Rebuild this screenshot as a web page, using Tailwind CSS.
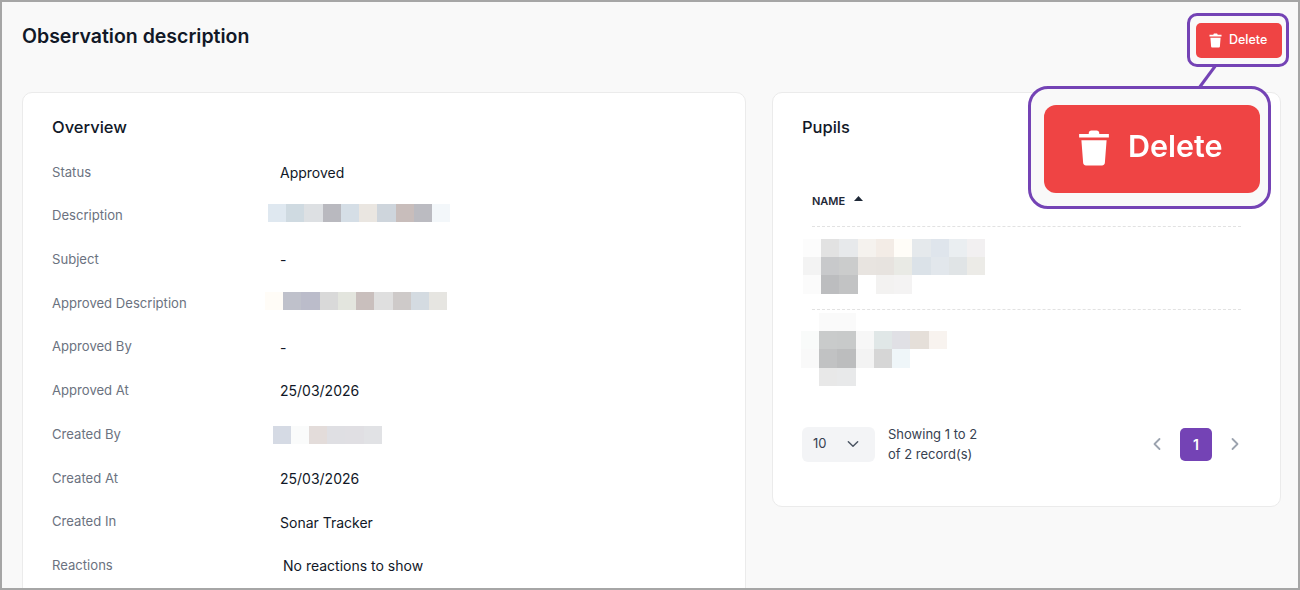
<!DOCTYPE html>
<html lang="en">
<head>
 <meta charset="UTF-8">
 <title>Observation description</title>
 <script src="https://cdn.jsdelivr.net/npm/@tailwindcss/browser@4"></script>
</head>
<body class="bg-[#f9f9f9]">
<div class="relative w-[1300px] h-[590px] overflow-hidden bg-[#f9f9f9] border-2 border-[#a6a6a6] font-['Inter',sans-serif] text-[#111827]">
 <div class="px-[20px]">
  <!-- header -->
  <div class="flex justify-between items-start h-[90px] mr-[-4px]">
   <h1 class="text-[19.5px] leading-[28px] font-semibold mt-[20px]">Observation description</h1>
   <button class="mt-[21px] w-[86px] h-[35px] bg-[#ef4444] text-white rounded-[5px] text-[12.500px] font-medium flex items-center justify-start pl-[11px] gap-[5px]">
    <svg class="w-[17px] h-[17px]" viewBox="0 0 24 24" fill="#fff"><path d="M9 3.500C9 2.700 9.700 2 10.500 2h3c.8 0 1.500.7 1.500 1.500V4h5.500v2.500h-17V4H9zM4.800 8h14.400l-1 12.600c-.1.8-.8 1.400-1.600 1.400H7.400c-.8 0-1.500-.6-1.600-1.400z"/></svg>
    Delete
   </button>
  </div>

  <div class="grid grid-cols-[724px_509px] gap-[26px] items-start">
   <!-- overview card -->
   <section class="bg-white border border-[#ebebeb] rounded-[10px] px-[29px] pt-[24px] h-[600px]">
    <h2 class="text-[16.500px] leading-[20px] font-medium mb-[13.700px]">Overview</h2>
    <div class="flex flex-col text-[14px]">
     <div class="flex items-center h-[43.700px]"><span class="w-[228px] text-[13.100px] text-[#6b7280]">Status</span><span>Approved</span></div>
     <div class="flex items-center h-[43.700px]"><span class="w-[228px] text-[13.100px] text-[#6b7280]">Description</span>
      <div class="flex h-[18px] ml-[-12px] mt-[-6px]">
       <i class="w-[18px] bg-[#dfe8f0]"></i><i class="w-[18px] bg-[#cfdae1]"></i><i class="w-[19px] bg-[#dde0e3]"></i><i class="w-[18px] bg-[#b9b9bf]"></i><i class="w-[18px] bg-[#d5dee6]"></i><i class="w-[18px] bg-[#eae6e1]"></i><i class="w-[19px] bg-[#ced5dc]"></i><i class="w-[18px] bg-[#c8bdbb]"></i><i class="w-[18px] bg-[#bbbbc1]"></i><i class="w-[18px] bg-[#f3f7fa]"></i>
      </div></div>
     <div class="flex items-center h-[43.700px]"><span class="w-[228px] text-[13.100px] text-[#6b7280]">Subject</span><span>-</span></div>
     <div class="flex items-center h-[43.700px]"><span class="w-[228px] text-[13.100px] text-[#6b7280]">Approved Description</span>
      <div class="flex h-[18px] ml-[-15px] mt-[-5px]">
       <i class="w-[18px] bg-[#fffcf7]"></i><i class="w-[18px] bg-[#bfc1cb]"></i><i class="w-[19px] bg-[#bbbcca]"></i><i class="w-[18px] bg-[#d9d9d9]"></i><i class="w-[18px] bg-[#e3e5de]"></i><i class="w-[18px] bg-[#c9bfbd]"></i><i class="w-[19px] bg-[#dfdfdf]"></i><i class="w-[18px] bg-[#cecac9]"></i><i class="w-[18px] bg-[#d4dbe1]"></i><i class="w-[18px] bg-[#e6e5e1]"></i>
      </div></div>
     <div class="flex items-center h-[43.700px]"><span class="w-[228px] text-[13.100px] text-[#6b7280]">Approved By</span><span>-</span></div>
     <div class="flex items-center h-[43.700px]"><span class="w-[228px] text-[13.100px] text-[#6b7280]">Approved At</span><span>25/03/2026</span></div>
     <div class="flex items-center h-[43.700px]"><span class="w-[228px] text-[13.100px] text-[#6b7280]">Created By</span>
      <div class="flex h-[18px] ml-[-7px]">
       <i class="w-[18px] bg-[#d5dae4]"></i><i class="w-[18px] bg-[#fafbfb]"></i><i class="w-[18px] bg-[#e3dcda]"></i><i class="w-[18px] bg-[#dfdfe3]"></i><i class="w-[19px] bg-[#e0dfe3]"></i><i class="w-[18px] bg-[#e1e2e5]"></i>
      </div></div>
     <div class="flex items-center h-[43.700px]"><span class="w-[228px] text-[13.100px] text-[#6b7280]">Created At</span><span>25/03/2026</span></div>
     <div class="flex items-center h-[43.700px]"><span class="w-[228px] text-[13.100px] text-[#6b7280]">Created In</span><span>Sonar Tracker</span></div>
     <div class="flex items-center h-[43.700px]"><span class="w-[228px] text-[13.100px] text-[#6b7280]">Reactions</span><span class="ml-[3px]">No reactions to show</span></div>
    </div>
   </section>

   <!-- pupils card -->
   <section class="bg-white border border-[#ebebeb] rounded-[10px] h-[415px] pl-[29px] pr-[39px] pt-[24px]">
    <h2 class="text-[16.500px] leading-[20px] font-medium">Pupils</h2>
    <div class="ml-[10px] h-[90px] flex items-end border-b border-dashed border-[#e2e2e2]">
     <div class="flex items-center gap-[9px] h-[16px] mb-[17px] text-[11px] font-semibold text-[#1f2937]">NAME
      <svg class="w-[9px] h-[5px] mb-[6px]" viewBox="0 0 9 5" fill="#1f2937"><path d="M4.500 0 9 5H0z"/></svg>
     </div>
    </div>
    <div class="h-[83px] pt-[12px] border-b border-dashed border-[#e2e2e2] ml-[10px]">
     <div class="flex h-[18px] ml-[-9px]">
      <i class="w-[18px] bg-[#fcfcfc]"></i><i class="w-[18px] bg-[#e2e2e2]"></i><i class="w-[19px] bg-[#e7e9eb]"></i><i class="w-[18px] bg-[#f5f2ee]"></i><i class="w-[18px] bg-[#f3ece6]"></i><i class="w-[18px] bg-[#fffdf8]"></i><i class="w-[19px] bg-[#e5e9ec]"></i><i class="w-[18px] bg-[#dfe5ec]"></i><i class="w-[18px] bg-[#eaeef1]"></i><i class="w-[18px] bg-[#f2f0f1]"></i>
     </div>
     <div class="flex h-[18px] ml-[-9px]">
      <i class="w-[18px] bg-[#f3f3f3]"></i><i class="w-[18px] bg-[#c8c9cb]"></i><i class="w-[19px] bg-[#cbcccc]"></i><i class="w-[18px] bg-[#e8e4e0]"></i><i class="w-[18px] bg-[#e7e3df]"></i><i class="w-[18px] bg-[#e9eae5]"></i><i class="w-[19px] bg-[#dbe2e8]"></i><i class="w-[18px] bg-[#e2e7ec]"></i><i class="w-[18px] bg-[#e0e4e6]"></i><i class="w-[18px] bg-[#ecebe7]"></i>
     </div>
     <div class="flex h-[19px] ml-[-9px]">
      <i class="w-[18px] bg-[#fbfbfb]"></i><i class="w-[18px] bg-[#bcbdbf]"></i><i class="w-[19px] bg-[#c2c3c4]"></i><i class="w-[18px] bg-white"></i><i class="w-[18px] bg-[#f3f2f1]"></i><i class="w-[18px] bg-[#f4f3f3]"></i>
     </div>
    </div>
    <div class="h-[114px] pt-[3px] ml-[10px]">
     <div class="flex h-[18px] ml-[-11px]">
      <i class="w-[18px] bg-white"></i><i class="w-[18px] bg-[#fafafa]"></i><i class="w-[19px] bg-[#fafafa]"></i>
     </div>
     <div class="flex h-[18px] ml-[-11px]">
      <i class="w-[18px] bg-[#f9fbfa]"></i><i class="w-[18px] bg-[#c9cbcb]"></i><i class="w-[19px] bg-[#c8caca]"></i><i class="w-[18px] bg-[#f7f7f7]"></i><i class="w-[18px] bg-[#e0e7e7]"></i><i class="w-[18px] bg-[#e0e0e5]"></i><i class="w-[19px] bg-[#e5dfd9]"></i><i class="w-[18px] bg-[#f8f3ef]"></i>
     </div>
     <div class="flex h-[19px] ml-[-11px]">
      <i class="w-[18px] bg-[#f9f9f9]"></i><i class="w-[18px] bg-[#c1c2c3]"></i><i class="w-[19px] bg-[#bcbdbe]"></i><i class="w-[18px] bg-[#f3f3f3]"></i><i class="w-[18px] bg-[#d6d6d6]"></i><i class="w-[18px] bg-[#eff6f9]"></i>
     </div>
     <div class="flex h-[18px] ml-[-11px]">
      <i class="w-[18px] bg-white"></i><i class="w-[18px] bg-[#e8e8e8]"></i><i class="w-[19px] bg-[#e8e9ea]"></i>
     </div>
    </div>
    <!-- footer -->
    <div class="flex items-center h-[40px] text-[13px] text-[#374151]">
     <div class="w-[73px] h-[35px] rounded-[6px] bg-[#f3f4f6] flex items-center justify-between pl-[11px] pr-[15px]">
      10
      <svg class="w-[14px] h-[14px]" viewBox="0 0 24 24" fill="none" stroke="#4b5563" stroke-width="2.500" stroke-linecap="round" stroke-linejoin="round"><path d="m4 8 8 8 8-8"/></svg>
     </div>
     <div class="ml-[13px] leading-[20px]">Showing 1 to 2<br>of 2 record(s)</div>
     <div class="ml-auto flex items-center">
      <svg class="w-[12px] h-[14px]" viewBox="0 0 12 14" fill="none" stroke="#9ca3af" stroke-width="1.800" stroke-linecap="round" stroke-linejoin="round"><path d="M8.500 2 3.500 7l5 5"/></svg>
      <div class="w-[32px] h-[33px] ml-[17px] rounded-[5px] bg-[#7443b5] text-white text-[14px] font-semibold flex items-center justify-center">1</div>
      <svg class="w-[12px] h-[14px] ml-[17px]" viewBox="0 0 12 14" fill="none" stroke="#9ca3af" stroke-width="1.800" stroke-linecap="round" stroke-linejoin="round"><path d="M3.500 2l5 5-5 5"/></svg>
     </div>
    </div>
   </section>
  </div>
 </div>

 <!-- annotation overlay -->
 <svg class="absolute left-[1194px] top-[62px] w-[26px] h-[26px]" viewBox="0 0 26 26" fill="none" stroke="#7443b5" stroke-width="3"><path d="M20 1 3 24"/></svg>
 <div class="absolute left-[1185px] top-[11px] w-[102px] h-[54px] rounded-[10px] border-[3px] border-[#7443b5]"></div>
 <div class="absolute left-[1026px] top-[84px] w-[243px] h-[123px] rounded-[20px] border-[3px] border-[#7443b5] bg-[#f9f9f9] pl-[13px] pt-[16px]">
  <div class="w-[216px] h-[88px] rounded-[12px] bg-[#ef4444] text-white flex items-center justify-start pl-[29px] gap-[13px] text-[30.500px] font-semibold blur-[0.4px]">
   <svg class="w-[42px] h-[42px] mt-[-3px]" viewBox="0 0 24 24" fill="#fff"><path d="M9 3.500C9 2.700 9.700 2 10.500 2h3c.8 0 1.500.7 1.500 1.500V4h5.500v2h-17V4H9zM4.800 7.500h14.400l-1 13.100c-.1.8-.8 1.400-1.600 1.400H7.400c-.8 0-1.500-.6-1.600-1.400z"/></svg>
   <span class="leading-none mb-[6px]">Delete</span>
  </div>
 </div>
</div>
</body>
</html>
